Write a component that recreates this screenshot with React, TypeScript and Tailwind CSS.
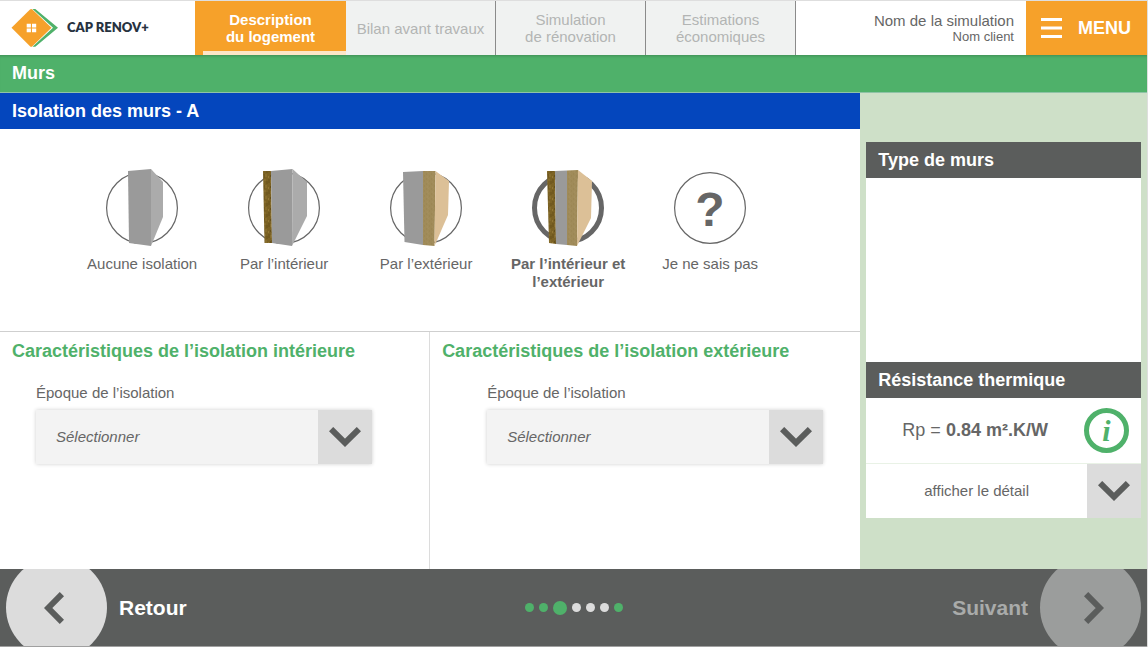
import { useState } from 'react';
import clsx from 'clsx';

type Point = [number, number];

interface Layer {
  points: Point[];
  fill: string;
}

interface Option {
  id: string;
  label: string;
  layers?: Layer[];
}

// Wall drawings, one polygon per visible layer on an 80x80 grid
const options: Option[] = [
  {
    id: 'none',
    label: 'Aucune isolation',
    layers: [
      { points: [[26, 3], [49, 1], [49, 78], [27, 75]], fill: '#9a9a9a' },
      { points: [[49, 1], [61, 14], [61, 49], [49, 78]], fill: '#ababab' },
    ],
  },
  {
    id: 'inside',
    label: 'Par l’intérieur',
    layers: [
      { points: [[19, 3], [27, 3], [28, 75], [20.5, 75]], fill: 'url(#wool)' },
      { points: [[27, 3], [48.5, 1], [48, 78], [28, 75]], fill: '#9a9a9a' },
      { points: [[48.5, 1], [63, 14], [63, 48], [48, 78]], fill: '#ababab' },
    ],
  },
  {
    id: 'outside',
    label: 'Par l’extérieur',
    layers: [
      { points: [[17, 4], [37, 3], [37, 77], [18.5, 74]], fill: '#9a9a9a' },
      { points: [[37, 3], [49.5, 3], [48.5, 78], [37, 77]], fill: 'url(#fiber)' },
      { points: [[49.5, 3], [63, 13], [62, 47], [48.5, 78]], fill: '#dcc097' },
    ],
  },
  {
    id: 'both',
    label: 'Par l’intérieur et l’extérieur',
    layers: [
      { points: [[19, 3], [27, 3], [28, 76], [21, 75]], fill: 'url(#wool)' },
      { points: [[27, 3], [39, 2.5], [39, 77], [28, 76]], fill: '#9a9a9a' },
      { points: [[39, 2.5], [50, 2], [49, 78], [39, 77]], fill: 'url(#fiber)' },
      { points: [[50, 2], [64, 13], [63, 50], [49, 78]], fill: '#dcc097' },
    ],
  },
  { id: 'unknown', label: 'Je ne sais pas' },
];

const tabs = [
  { lines: ['Description', 'du logement'], active: true },
  { lines: ['Bilan avant travaux'], active: false },
  { lines: ['Simulation', 'de rénovation'], active: false },
  { lines: ['Estimations', 'économiques'], active: false },
];

const steps = ['done', 'done', 'current', 'todo', 'todo', 'todo', 'done'];

function ChevronDown() {
  return (
    <svg width="32" height="20" viewBox="0 0 32 20" fill="none" stroke="#5b5d5c" strokeWidth="6" aria-hidden="true">
      <path d="M2.1 2.1 16 15.8 29.9 2.1" />
    </svg>
  );
}

function ChevronSide({ flip = false }: { flip?: boolean }) {
  return (
    <svg width="20" height="32" viewBox="0 0 20 32" fill="none" stroke="#5b5d5c" strokeWidth="6" aria-hidden="true">
      <path d={flip ? 'M2.1 2.1 15.8 16 2.1 29.9' : 'M17.9 2.1 4.2 16 17.9 29.9'} />
    </svg>
  );
}

function Logo() {
  return (
    <svg width="48" height="40" viewBox="0 0 48 40" aria-hidden="true">
      <path d="M21.5 1h2.8L47 19.8 24.3 38.8h-2.8L42 19.8z" fill="#4fb16a" />
      <path d="M19 1.6q1.2-1 2.4 0L40.5 19.8 21.4 38.2q-1.2 1-2.4 0L.5 19.8z" fill="#f6a12a" />
      <path d="M15.7 15.8h4.2v3.7h-4.2zM21 15.8h4.2v3.7H21zM15.7 20.6h4.2v3.7h-4.2zM21 20.6h4.2v3.7H21z" fill="#fff" />
    </svg>
  );
}

// Shared textures for the insulation layers
function Textures() {
  return (
    <svg className="absolute size-0" aria-hidden="true">
      <defs>
        <pattern id="wool" width="8" height="11" patternUnits="userSpaceOnUse">
          <rect width="8" height="11" fill="#7b6224" />
          <path d="M1 0v4M4 6v4M7 2v3M2.5 7v2" stroke="#665019" />
          <path d="M3 1v3M6 6v3M.5 8v2M5 0v2" stroke="#917633" />
        </pattern>
        <pattern id="fiber" width="5" height="5" patternUnits="userSpaceOnUse">
          <rect width="5" height="5" fill="#a08b59" />
          <path d="M0 1h1M3 3h1" stroke="#98834f" />
          <path d="M2 0h1M1 4h1" stroke="#a69160" />
        </pattern>
      </defs>
    </svg>
  );
}

function WallIcon({ layers, selected }: { layers?: Layer[]; selected: boolean }) {
  return (
    <svg width="80" height="80" viewBox="0 0 80 80" aria-hidden="true">
      <circle
        cx="40"
        cy="40"
        r={selected ? 33.5 : 35.4}
        fill="#fff"
        stroke="#666"
        strokeWidth={selected ? 5 : 1.2}
      />
      {layers?.map((layer, index) => (
        <polygon key={index} points={layer.points.join(' ')} fill={layer.fill} />
      ))}
      {!layers && (
        <text x="40" y="58" textAnchor="middle" fill="#666" className="text-[48px] font-bold">
          ?
        </text>
      )}
    </svg>
  );
}

function PeriodField({ id }: { id: string }) {
  return (
    <div className="w-[336px] max-w-full">
      <label htmlFor={id} className="block text-[15px] leading-[18px]">
        Époque de l’isolation
      </label>
      <div className="relative mt-2 shadow-[0_0_4px_rgba(0,0,0,0.2)]">
        <select
          id={id}
          className="block h-[54px] w-full appearance-none bg-[#f3f3f3] pr-16 pl-5 text-[15px] italic outline-none"
        >
          <option>Sélectionner</option>
        </select>
        <span className="pointer-events-none absolute inset-y-0 right-0 flex w-[54px] items-center justify-center bg-[#dcdcdc]">
          <ChevronDown />
        </span>
      </div>
    </div>
  );
}

function PanelTitle({ children }: { children: string }) {
  return (
    <h2 className="bg-[#5b5d5c] px-3 text-[18px] leading-9 font-bold text-white">{children}</h2>
  );
}

export default function App() {
  const [selected, setSelected] = useState('both');

  return (
    <div className="flex min-h-screen flex-col border-t border-r border-[#dedede] bg-white font-['Liberation_Sans',Arial,sans-serif] text-[#666]">
      <Textures />

      {/* Top bar */}
      <header className="flex h-[54px] items-stretch">
        <a href="#" className="flex w-[195px] items-center gap-2 pl-[11px]">
          <Logo />
          <span className="font-['Lato',sans-serif] text-[13px] font-extrabold text-[#27323f]">CAP RENOV+</span>
        </a>
        <nav className="flex">
          {tabs.map((tab) => (
            <a
              key={tab.lines[0]}
              href="#"
              className={clsx(
                'relative flex flex-col items-center justify-center text-[15px] leading-[17px]',
                tab.active
                  ? 'w-[151px] bg-[#f6a12a] font-bold text-white'
                  : 'w-[150px] border-r border-[#8b8b8b] bg-[#f0f2f1] text-[#b3b5b4]'
              )}
            >
              {tab.lines.map((line) => (
                <span key={line}>{line}</span>
              ))}
              {tab.active && <span className="absolute right-0 bottom-0 left-2 h-1 bg-[#fde6c8]" />}
            </a>
          ))}
        </nav>
        <div className="flex flex-1 flex-col items-end justify-center pr-3">
          <span className="text-[15px] leading-[17px]">Nom de la simulation</span>
          <span className="text-[13px] leading-[15px]">Nom client</span>
        </div>
        <button type="button" className="flex w-[121px] items-center gap-4 bg-[#f6a12a] pl-[15px] text-[18px] font-bold text-white">
          <svg width="21" height="20" viewBox="0 0 21 20" stroke="#fff" strokeWidth="3" aria-hidden="true">
            <path d="M0 1.5h21M0 10h21M0 18.5h21" />
          </svg>
          MENU
        </button>
      </header>

      <h1 className="bg-[#4fb16a] px-3 text-[18px] leading-[37px] font-bold text-white shadow-[inset_0_3px_3px_-2px_rgba(0,0,0,0.2)]">
        Murs
      </h1>

      <div className="flex flex-1 items-stretch border-t border-[#8fc3a6]">
        <main className="flex w-3/4 flex-col">
          <h2 className="bg-[#0446bd] px-3 text-[18px] leading-9 font-bold text-white">
            Isolation des murs - A
          </h2>

          <fieldset aria-label="Isolation des murs" className="flex h-[202px] justify-center pt-[39px] pr-2">
            {options.map((option) => (
              <label
                key={option.id}
                className={clsx(
                  'relative flex w-[142px] flex-col items-center gap-[7px] px-2 text-center text-[15px] leading-[18px]',
                  option.id === selected && 'font-bold'
                )}
              >
                <input
                  type="radio"
                  name="isolation"
                  className="absolute inset-0 cursor-pointer appearance-none"
                  checked={option.id === selected}
                  onChange={() => setSelected(option.id)}
                />
                <WallIcon layers={option.layers} selected={option.id === selected} />
                {option.label}
              </label>
            ))}
          </fieldset>

          <div className="grid flex-1 grid-cols-2 border-t border-[#cfcfcf]">
            <section className="border-r border-[#dcdcdc] pt-2">
              <h3 className="pl-3 text-[18px] leading-[22px] font-bold text-[#4fb16a]">
                Caractéristiques de l’isolation intérieure
              </h3>
              <div className="mt-[22px] pl-9">
                <PeriodField id="period-inside" />
              </div>
            </section>
            <section className="pt-2">
              <h3 className="pl-3 text-[18px] leading-[22px] font-bold text-[#4fb16a]">
                Caractéristiques de l’isolation extérieure
              </h3>
              <div className="mt-[22px] pl-[57px]">
                <PeriodField id="period-outside" />
              </div>
            </section>
          </div>
        </main>

        <aside className="flex w-1/4 flex-col bg-[#cee0c8] px-[6px] pt-[49px] pb-[51px]">
          <PanelTitle>Type de murs</PanelTitle>
          <div className="flex-1 bg-white" />
          <PanelTitle>Résistance thermique</PanelTitle>
          <div className="flex h-[65px] items-center bg-white pr-3">
            <p className="flex-1 text-center text-[18px]">
              Rp = <strong>0.84 m².K/W</strong>
            </p>
            <button
              type="button"
              aria-label="Informations"
              className="flex size-[45px] items-center justify-center rounded-full border-[5px] border-[#4fb16a] font-['Liberation_Serif',serif] text-[30px] leading-none font-bold text-[#4fb16a] italic"
            >
              i
            </button>
          </div>
          <button
            type="button"
            className="flex h-[55px] items-stretch border-t border-[#e9f2e6] bg-white text-[15px]"
          >
            <span className="flex-1 self-center">afficher le détail</span>
            <span className="flex w-[54px] items-center justify-center bg-[#dcdcdc]">
              <ChevronDown />
            </span>
          </button>
        </aside>
      </div>

      {/* Step navigation */}
      <footer className="grid h-[78px] grid-cols-[1fr_auto_1fr] content-center items-center overflow-hidden border-b border-[#a0a0a0] bg-[#5b5d5c] px-[6px] text-[21px] font-bold">
        <button type="button" className="flex items-center gap-3 justify-self-start text-white">
          <span className="flex size-[101px] items-center justify-center rounded-full bg-[#dcdcdc] pr-[6px]">
            <ChevronSide />
          </span>
          Retour
        </button>
        <div className="flex items-center gap-[5px]">
          {steps.map((step, index) => (
            <span
              key={index}
              className={clsx(
                'rounded-full',
                step === 'current' ? 'size-[14px]' : 'size-[9px]',
                step === 'todo' ? 'bg-[#dcdcdc]' : 'bg-[#4fb16a]'
              )}
            />
          ))}
        </div>
        <button type="button" disabled className="flex items-center gap-3 justify-self-end text-[#a9abaa]">
          Suivant
          <span className="flex size-[101px] items-center justify-center rounded-full bg-[#9b9d9c] pl-[6px]">
            <ChevronSide flip />
          </span>
        </button>
      </footer>
    </div>
  );
}
